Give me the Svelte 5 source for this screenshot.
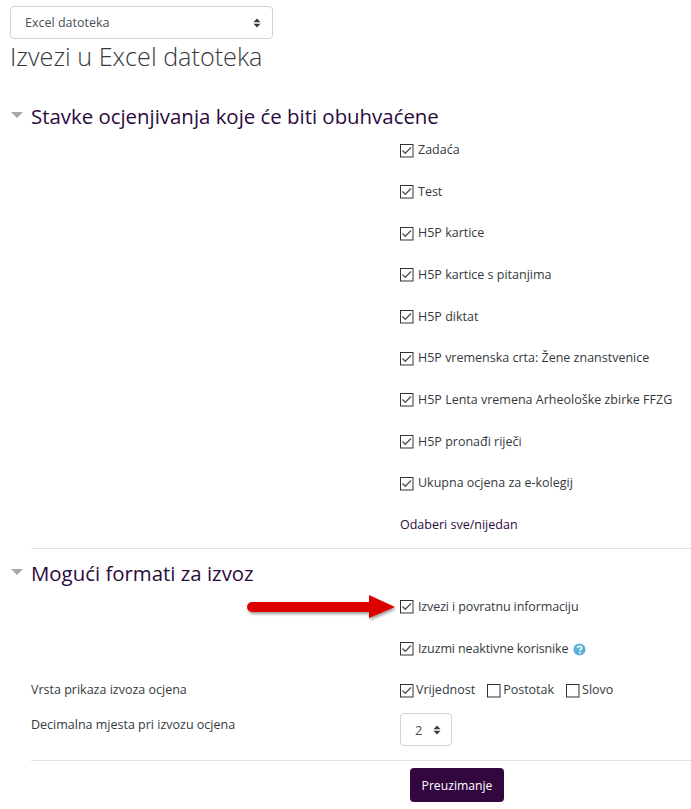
<script>
  const items = ['Zadaća','Test','H5P kartice','H5P kartice s pitanjima','H5P diktat','H5P vremenska crta: Žene znanstvenice','H5P Lenta vremena Arheološke zbirke FFZG','H5P pronađi riječi','Ukupna ocjena za e-kolegij'];
</script>

{#snippet box(checked)}
  <svg class="box" width="15" height="15" viewBox="0 0 15 15" aria-hidden="true">
    <rect x="1.5" y="1.5" width="12.5" height="12.5" fill="#fff" stroke="#333" stroke-width="1"/>
    {#if checked}<path d="M3.4 7.4 L6.3 10.3 L12 4.6" fill="none" stroke="#555" stroke-width="1.4"/>{/if}
  </svg>
{/snippet}

{#snippet carets()}
  <svg class="carets" width="8" height="10" viewBox="0 0 8 10" aria-hidden="true">
    <path d="M4 0.5 L7.5 4.2 H0.5 Z M4 9.5 L0.5 5.8 H7.5 Z" fill="#343a40"/>
  </svg>
{/snippet}

<div class="page">
  <div class="select wide"><span>Excel datoteka</span>{@render carets()}</div>
  <h1>Izvezi u Excel datoteka</h1>

  <section class="first">
    <h2><span class="tri"></span>Stavke ocjenjivanja koje će biti obuhvaćene</h2>
    <div class="rows">
      {#each items as item}
        <div class="row"><label>{@render box(true)}{item}</label></div>
      {/each}
      <div class="row link">Odaberi sve/nijedan</div>
    </div>
  </section>

  <section class="second">
    <h2><span class="tri"></span>Mogući formati za izvoz</h2>
    <div class="rows">
      <div class="row"><label class="narrow">{@render box(true)}Izvezi i povratnu informaciju</label></div>
      <div class="row"><label class="narrow">{@render box(true)}Izuzmi neaktivne korisnike</label>
        <svg class="help" width="13" height="13" viewBox="0 0 13 13" aria-hidden="true"><circle cx="6.5" cy="6.5" r="6" fill="#5bb0d6"/><path d="M4.5 5.1 C4.6 3.8 5.5 3.2 6.6 3.2 C7.8 3.2 8.7 3.9 8.7 5 C8.7 6.4 6.9 6.4 6.9 7.8" fill="none" stroke="#fff" stroke-width="1.5"/><circle cx="6.9" cy="9.7" r="0.95" fill="#fff"/></svg>
      </div>
      <div class="row labelled tight">
        <span class="lab">Vrsta prikaza izvoza ocjena</span>
        <div class="opts">
          <label class="opt">{@render box(true)}Vrijednost</label>
          <label class="opt">{@render box(false)}Postotak</label>
          <label class="opt">{@render box(false)}Slovo</label>
        </div>
      </div>
      <div class="row labelled decimal">
        <span class="lab">Decimalna mjesta pri izvozu ocjena</span>
        <div class="select small"><span>2</span>{@render carets()}</div>
      </div>
    </div>
  </section>

  <div class="actions"><button type="button">Preuzimanje</button></div>

  <svg class="arrow" width="160" height="44" viewBox="0 0 160 44" aria-hidden="true">
    <defs><filter id="sh" x="-10%" y="-30%" width="120%" height="170%"><feDropShadow dx="1" dy="2" stdDeviation="1.5" flood-color="#000" flood-opacity=".4"/></filter></defs>
    <path d="M10 16 H127 V9 L153 21 L127 32 V26 H10 A5 5 0 0 1 10 16 Z" fill="#dc0000" filter="url(#sh)"/>
  </svg>
</div>

<style>
  :global(body){margin:0;background:#fff;}
  .page{position:relative;width:691px;height:809px;overflow:hidden;box-sizing:border-box;padding:6px 0 0 10px;font-family:"Open Sans","Noto Sans",sans-serif;font-size:12.5px;color:#343a40;}
  .select{display:flex;align-items:center;justify-content:space-between;box-sizing:border-box;height:33px;border:1px solid #ced4da;border-radius:4px;background:#fff;color:#495057;}
  .wide{width:263px;padding:0 11px 0 14px;}
  .small{width:52px;margin-left:1px;padding:0 10px 0 14px;font-size:13px;}
  h1{margin:-1px 0 0;font-size:25.2px;font-weight:300;line-height:36px;color:#343a40;}
  section h2{position:relative;margin:0;padding-left:21px;font-size:20.4px;font-weight:400;line-height:28px;color:#2b0a3d;}
  .tri{position:absolute;left:1px;top:10px;width:0;height:0;border-left:6px solid transparent;border-right:6px solid transparent;border-top:6px solid #a8a8a8;}
  .first{margin-top:28px;}
  .rows{margin-top:11px;}
  .first .rows{border-bottom:1px solid #dee2e6;margin-left:21px;}
  .first .link{height:32px;}
  .second{margin-top:10px;}
  .second .rows{margin-left:21px;margin-top:11px;}
  .row{box-sizing:border-box;height:41.67px;padding-left:368px;display:flex;align-items:flex-start;line-height:18px;white-space:nowrap;}
  label{display:flex;align-items:center;gap:4px;}
  .narrow{letter-spacing:-.12px;}
  .box{flex:none;}
  .link{color:#2b0a3d;padding-left:369px;}
  .help{margin:3px 0 0 5px;}
  .labelled{position:relative;}
  .lab{position:absolute;left:0;top:0;}
  .opts{display:flex;gap:11px;}
  .opt{gap:2px;}
  .tight{height:35px;}
  .decimal{height:44px;}
  .decimal .select{margin-top:-3px;}
  .actions{border-top:1px solid #dee2e6;margin-left:21px;padding:7px 0 0 379px;}
  button{box-sizing:border-box;width:94px;height:34px;border:0;border-radius:4px;background:#32063f;color:#fff;font:inherit;font-size:12.2px;padding:0;}
  .arrow{position:absolute;left:242px;top:586px;}
</style>
